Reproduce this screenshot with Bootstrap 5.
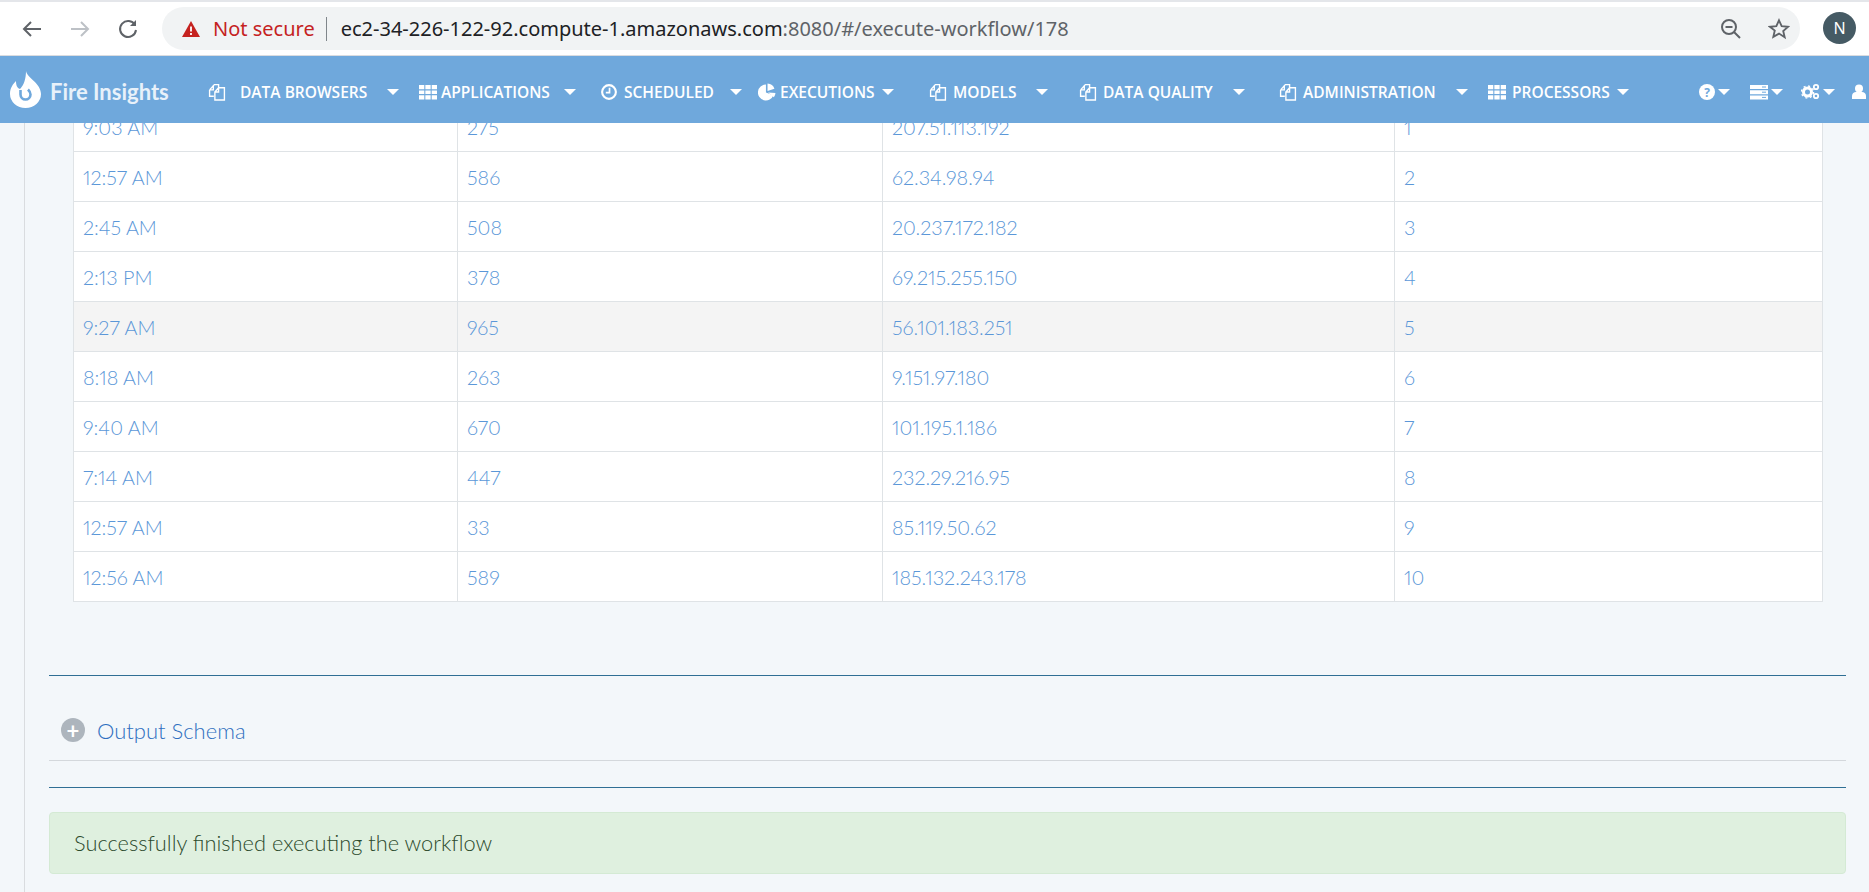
<!DOCTYPE html>
<html lang="en">
<head>
  <meta charset="UTF-8" />
  <title>Fire Insights</title>
  <link href="https://cdn.jsdelivr.net/npm/bootstrap@5.3.2/dist/css/bootstrap.min.css" rel="stylesheet" />
  <style>
    html, body { height: 100%; overflow: hidden; }
    body { background: #f3f7fa; font-family: Lato, "Liberation Sans", sans-serif; }
    .chrome-bar { height: 56px; background: #fff; border-bottom: 1px solid #dadce0; border-top: 2px solid #e4e6ea; }
    .chrome-nav { width: 162px; padding-left: 20px; gap: 24px; }
    .url-pill { width: 1638px; height: 43px; margin-top: 5px; background: #f1f3f4; border-radius: 22px; padding: 0 10px 0 19px; font: 20px "Noto Sans", sans-serif; }
    .not-secure { color: #c5221f; }
    .url-sep { width: 1px; height: 24px; background: #80868b; margin: 0 14px 0 11px; }
    .url-main { color: #202124; }
    .url-rest { color: #5f6368; }
    .url-tools { gap: 26px; }
    .avatar { width: 33px; height: 32px; border-radius: 50%; background: #455a64; color: #fff; font: 16px "Noto Sans", sans-serif; margin-left: 23px; margin-top: 10px; }
    .top-nav { height: 67px; padding-top: 4px; background: #6fa8dc; color: #fff; flex-wrap: nowrap; white-space: nowrap; font: 600 15.5px "Open Sans", sans-serif; overflow: hidden; }
    .brand-text { flex: none; font: 700 22px Lato, sans-serif; margin-left: 9px; color: #e8f1fa; width: 158px; }
    .flame-icon { margin-left: 10px; margin-top: -4px; flex: none; }
    .nav-entry { flex: none; }
    .nav-ico { width: 18px; height: 18px; flex: none; margin-right: 14px; }
    .ico-close { margin-right: 4px; }
    .ico-mid { margin-right: 6px; }
    .caret-mark { flex: none; width: 0; height: 0; border-left: 6px solid transparent; border-right: 6px solid transparent; border-top: 6px solid #fff; margin-left: 20px; }
    .caret-a { margin-left: 14px; }
    .caret-b { margin-left: 16px; }
    .caret-c { margin-left: 7px; }
    .caret-tight { margin-left: 3px; }
    .ne-1 { width: 211px; }
    .ne-2 { width: 181px; }
    .ne-3 { width: 158px; }
    .ne-4 { width: 171px; }
    .ne-5 { width: 150px; }
    .ne-6 { width: 200px; }
    .ne-7 { width: 209px; }
    .ne-8 { width: 211px; }
    .util-entry { width: 51px; flex: none; }
    .page-area { height: 769px; overflow: hidden; position: relative; }
    .side-rule { width: 25px; border-right: 1px solid #d9dcdf; flex: none; }
    .page-inner { width: 1797px; margin-left: 24px; }
    .data-grid { width: 1749px; margin-left: 24px; margin-top: -22px; background: #fff; border-collapse: collapse; table-layout: fixed; font: 300 19.8px Lato, sans-serif; font-variant-numeric: proportional-nums; color: #5b97d8; }
    .data-grid td { height: 50px; padding: 0 9px; border: 1px solid #dfe3e6; vertical-align: middle; }
    .data-grid tr.row-hover td { background: #f4f4f4; }
    .rule-dark { height: 1px; background: #2f6f94; }
    .rule-first { margin-top: 73px; }
    .rule-second { margin-top: 26px; }
    .schema-row { height: 85px; border-bottom: 1px solid #d4d8dc; padding-left: 12px; padding-top: 24px; color: #2f6fc0; font-size: 22px; font-weight: 300; }
    .plus-dot { width: 24px; height: 24px; border-radius: 50%; background: #adb5bd; color: #fff; margin-right: 12px; font-weight: 700; }
    .done-alert { height: 62px; margin-top: 24px; background: #dff0df; border: 1px solid #d4ead4; border-radius: 4px; color: #2c4a2c; font-size: 21.8px; font-weight: 300; padding-left: 24px; }
  </style>
</head>
<body>
  <svg width="0" height="0" class="d-block">
    <defs>
      <symbol id="ico-files" viewBox="0 0 17 17"><path d="M1.500 6.500 6 1.500h4v3M1.500 6.500v6h4M1.500 6.500H5V2" fill="none" stroke="#fff" stroke-width="1.300"/><path d="M6.500 8.500l3.500-4h5.500v11.500h-9zM6.500 8.500H10V4.500" fill="none" stroke="#fff" stroke-width="1.300"/></symbol>
      <symbol id="ico-grid" viewBox="0 0 17 17"><path d="M0 2h5v4H0zM6 2h5v4H6zM12 2h5v4h-5zM0 7h5v3.500H0zM6 7h5v3.500H6zM12 7h5v3.500h-5zM0 11.500h5v4H0zM6 11.500h5v4H6zM12 11.500h5v4h-5z" fill="#fff"/></symbol>
      <symbol id="ico-clock" viewBox="0 0 17 17"><circle cx="8.500" cy="8.500" r="6.500" fill="none" stroke="#fff" stroke-width="2"/><path d="M9 4.500v4.500H5.500" fill="none" stroke="#fff" stroke-width="1.600"/></symbol>
      <symbol id="ico-pie" viewBox="0 0 17 17"><path d="M7.500 1.500a7.500 7.500 0 1 0 7 10L7.500 9z" fill="#fff"/><path d="M9 .5v7l6.500-2A7 7 0 0 0 9 .5zM9.500 9l7 .5a7 7 0 0 1-1.500 4z" fill="#fff"/></symbol>
    </defs>
  </svg>

  <div class="chrome-bar d-flex">
    <div class="chrome-nav d-flex align-items-center">
      <svg width="24" height="24" viewBox="0 0 24 24" fill="none" stroke="#5f6368" stroke-width="2"><path d="M21 12H4M11 5l-7 7 7 7"/></svg>
      <svg width="24" height="24" viewBox="0 0 24 24" fill="none" stroke="#bdc1c6" stroke-width="2"><path d="M3 12h17M13 5l7 7-7 7"/></svg>
      <svg width="24" height="24" viewBox="0 0 24 24" fill="none" stroke="#5f6368" stroke-width="2"><path d="M19 8a8 8 0 1 0 1 5"/><path d="M20 3v6h-6" fill="#5f6368" stroke="none"/></svg>
    </div>
    <div class="url-pill d-flex align-items-center">
      <svg width="20" height="18" viewBox="0 0 20 18" class="me-2"><path d="M10 1l9 16H1z" fill="#c5221f"/><path d="M10 6.500v5M10 13v2" stroke="#fff" stroke-width="1.800"/></svg>
      <span class="not-secure ms-1">Not secure</span>
      <span class="url-sep"></span>
      <span><span class="url-main">ec2-34-226-122-92.compute-1.amazonaws.com</span><span class="url-rest">:8080/#/execute-workflow/178</span></span>
      <span class="url-tools ms-auto d-flex align-items-center">
        <svg width="22" height="22" viewBox="0 0 22 22" fill="none" stroke="#5f6368" stroke-width="2"><circle cx="9" cy="9" r="7"/><path d="M14 14l6 6M5.500 9h7"/></svg>
        <svg width="22" height="22" viewBox="0 0 24 24" fill="none" stroke="#5f6368" stroke-width="2"><path d="M12 2.500l2.900 6.400 7 .7-5.300 4.600 1.600 6.900L12 17l-6.200 3.600 1.600-6.900L2.100 9.600l7-.7z"/></svg>
      </span>
    </div>
    <div class="avatar d-flex align-items-center justify-content-center">N</div>
  </div>

  <nav class="top-nav d-flex align-items-center">
    <svg class="flame-icon" width="31" height="37" viewBox="0 0 31 37"><path d="M16 0c1 7 15 12 15 23a15.500 14 0 0 1-31 0C0 17 3 13 6 10c0 4 1 7 4 8 4-4 6-11 6-18z" fill="#fff"/><path d="M10.500 19v4.500a5 5 0 0 0 10 0c0-2-1-3.500-2.500-5" fill="none" stroke="#6fa8dc" stroke-width="2.600"/></svg>
    <span class="brand-text">Fire Insights</span>

    <div class="nav-entry ne-1 d-flex align-items-center"><svg class="nav-ico"><use href="#ico-files"/></svg>DATA BROWSERS<span class="caret-mark"></span></div>
    <div class="nav-entry ne-2 d-flex align-items-center"><svg class="nav-ico ico-close"><use href="#ico-grid"/></svg>APPLICATIONS<span class="caret-mark caret-a"></span></div>
    <div class="nav-entry ne-3 d-flex align-items-center"><svg class="nav-ico ico-mid"><use href="#ico-clock"/></svg>SCHEDULED<span class="caret-mark caret-b"></span></div>
    <div class="nav-entry ne-4 d-flex align-items-center"><svg class="nav-ico ico-close"><use href="#ico-pie"/></svg>EXECUTIONS<span class="caret-mark caret-c"></span></div>
    <div class="nav-entry ne-5 d-flex align-items-center"><svg class="nav-ico ico-mid"><use href="#ico-files"/></svg>MODELS<span class="caret-mark"></span></div>
    <div class="nav-entry ne-6 d-flex align-items-center"><svg class="nav-ico ico-mid"><use href="#ico-files"/></svg>DATA QUALITY<span class="caret-mark"></span></div>
    <div class="nav-entry ne-7 d-flex align-items-center"><svg class="nav-ico ico-mid"><use href="#ico-files"/></svg>ADMINISTRATION<span class="caret-mark"></span></div>
    <div class="nav-entry ne-8 d-flex align-items-center"><svg class="nav-ico ico-mid"><use href="#ico-grid"/></svg>PROCESSORS<span class="caret-mark caret-c"></span></div>

    <div class="util-entry d-flex align-items-center">
      <svg width="16" height="16" viewBox="0 0 16 16"><circle cx="8" cy="8" r="8" fill="#fff"/><text x="8" y="12.500" text-anchor="middle" font-size="12" font-weight="700" font-family="Open Sans" fill="#6fa8dc">?</text></svg>
      <span class="caret-mark caret-tight"></span>
    </div>
    <div class="util-entry d-flex align-items-center">
      <svg width="18" height="16" viewBox="0 0 18 16"><path d="M0 1h18v4H0zM0 6.200h18v4H0zM0 11.400h18v4H0z" fill="#fff"/><path d="M12 3h4M12 8.200h4M12 13.400h4" stroke="#6fa8dc" stroke-width="1"/></svg>
      <span class="caret-mark caret-tight"></span>
    </div>
    <div class="util-entry d-flex align-items-center">
      <svg width="19" height="17" viewBox="0 0 19 17"><circle cx="6.500" cy="9" r="4" fill="none" stroke="#fff" stroke-width="3"/><circle cx="6.500" cy="9" r="6" fill="none" stroke="#fff" stroke-width="1.500" stroke-dasharray="2 2.700"/><circle cx="15" cy="4" r="2.200" fill="none" stroke="#fff" stroke-width="1.800"/><circle cx="15" cy="13" r="2.200" fill="none" stroke="#fff" stroke-width="1.800"/></svg>
      <span class="caret-mark caret-tight"></span>
    </div>
    <div class="util-entry d-flex align-items-center">
      <svg width="14" height="16" viewBox="0 0 14 16"><circle cx="7" cy="4.500" r="4" fill="#fff"/><path d="M0 15v-3c0-2.500 2-4 4-4h6c2 0 4 1.500 4 4v3z" fill="#fff"/></svg>
      <span class="caret-mark caret-tight"></span>
    </div>
  </nav>

  <div class="page-area d-flex">
    <div class="side-rule"></div>
    <div class="page-inner">
      <table class="data-grid">
        <colgroup><col style="width:384px"><col style="width:425px"><col style="width:512px"><col style="width:428px"></colgroup>
        <tbody id="gridBody"></tbody>
      </table>
      <div class="rule-dark rule-first"></div>
      <div class="schema-row d-flex align-items-center">
        <span class="plus-dot d-flex align-items-center justify-content-center">+</span>Output Schema
      </div>
      <div class="rule-dark rule-second"></div>
      <div class="done-alert d-flex align-items-center">Successfully finished executing the workflow</div>
    </div>
  </div>

  <script>
    const rows = [
      ["9:03 AM", 275, "207.51.113.192", 1],
      ["12:57 AM", 586, "62.34.98.94", 2],
      ["2:45 AM", 508, "20.237.172.182", 3],
      ["2:13 PM", 378, "69.215.255.150", 4],
      ["9:27 AM", 965, "56.101.183.251", 5],
      ["8:18 AM", 263, "9.151.97.180", 6],
      ["9:40 AM", 670, "101.195.1.186", 7],
      ["7:14 AM", 447, "232.29.216.95", 8],
      ["12:57 AM", 33, "85.119.50.62", 9],
      ["12:56 AM", 589, "185.132.243.178", 10]
    ];
    document.getElementById("gridBody").innerHTML = rows.map((r, i) =>
      `<tr class="${i === 4 ? "row-hover" : ""}">${r.map(c => `<td>${c}</td>`).join("")}</tr>`).join("");
  </script>
</body>
</html>
